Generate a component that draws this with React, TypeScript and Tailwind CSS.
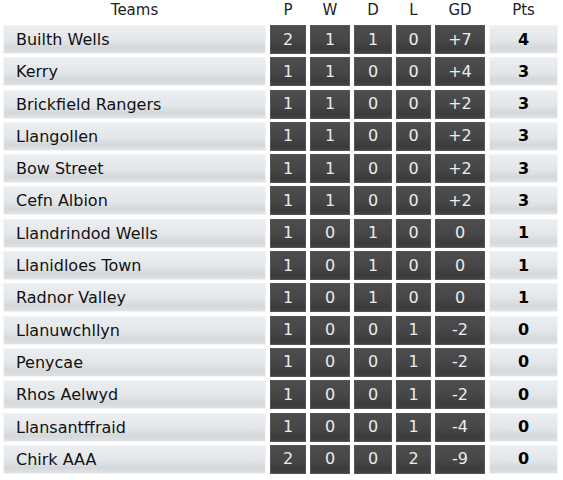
import React from "react";

const rows: [string, number, number, number, number, string, number][] = [
  ["Builth Wells", 2, 1, 1, 0, "+7", 4],
  ["Kerry", 1, 1, 0, 0, "+4", 3],
  ["Brickfield Rangers", 1, 1, 0, 0, "+2", 3],
  ["Llangollen", 1, 1, 0, 0, "+2", 3],
  ["Bow Street", 1, 1, 0, 0, "+2", 3],
  ["Cefn Albion", 1, 1, 0, 0, "+2", 3],
  ["Llandrindod Wells", 1, 0, 1, 0, "0", 1],
  ["Llanidloes Town", 1, 0, 1, 0, "0", 1],
  ["Radnor Valley", 1, 0, 1, 0, "0", 1],
  ["Llanuwchllyn", 1, 0, 0, 1, "-2", 0],
  ["Penycae", 1, 0, 0, 1, "-2", 0],
  ["Rhos Aelwyd", 1, 0, 0, 1, "-2", 0],
  ["Llansantffraid", 1, 0, 0, 1, "-4", 0],
  ["Chirk AAA", 2, 0, 0, 2, "-9", 0],
];

const cols = "grid grid-cols-[263px_36px_40px_38px_35px_50px_69px] gap-x-[4px]";
const light =
  "bg-[linear-gradient(to_bottom,#eceef0_0%,#e3e6e9_55%,#d5d8db_80%,#dfe2e4_100%)] border border-[#f3f4f5]";
const dark =
  "bg-[linear-gradient(to_bottom,#4d4d4d_0%,#464646_55%,#3b3b3b_85%,#424242_100%)] border border-[#555555] text-[#ececec] flex items-center justify-center";

export default function App() {
  return (
    <div
      className="w-[563px] h-[480px] bg-white pl-[3px] text-[16px]"
      style={{ fontFamily: '"DejaVu Sans", Verdana, sans-serif' }}
    >
      <div className={`${cols} h-[24px] pt-[2px] text-[15px] text-[#222] leading-[17px]`}>
        <div className="text-center">Teams</div>
        <div className="text-center">P</div>
        <div className="text-center">W</div>
        <div className="text-center">D</div>
        <div className="text-center">L</div>
        <div className="text-center">GD</div>
        <div className="text-center">Pts</div>
      </div>
      <div className="flex flex-col gap-[3.3px] mt-[1px]">
        {rows.map((r) => (
          <div key={r[0]} className={`${cols} h-[29px]`}>
            <div className={`${light} flex items-center pl-[12px] text-[#111] pt-[1px]`}>{r[0]}</div>
            <div className={dark}>{r[1]}</div>
            <div className={dark}>{r[2]}</div>
            <div className={dark}>{r[3]}</div>
            <div className={dark}>{r[4]}</div>
            <div className={dark}>{r[5]}</div>
            <div className={`${light} flex items-center justify-center font-bold text-black`}>{r[6]}</div>
          </div>
        ))}
      </div>
    </div>
  );
}
